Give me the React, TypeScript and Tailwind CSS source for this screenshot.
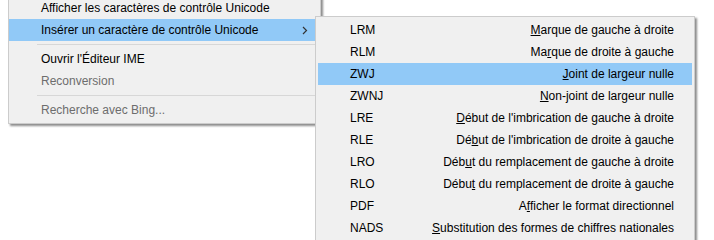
import { ReactNode } from "react";

type SubItem = { code: string; label: ReactNode; active?: boolean };

const subItems: SubItem[] = [
  { code: "LRM", label: <><u>M</u>arque de gauche à droite</> },
  { code: "RLM", label: <>Ma<u>r</u>que de droite à gauche</> },
  { code: "ZWJ", label: <><u>J</u>oint de largeur nulle</>, active: true },
  { code: "ZWNJ", label: <><u>N</u>on-joint de largeur nulle</> },
  { code: "LRE", label: <><u>D</u>ébut de l'imbrication de gauche à droite</> },
  { code: "RLE", label: <>Dé<u>b</u>ut de l'imbrication de droite à gauche</> },
  { code: "LRO", label: <>Déb<u>u</u>t du remplacement de gauche à droite</> },
  { code: "RLO", label: <>Débu<u>t</u> du remplacement de droite à gauche</> },
  { code: "PDF", label: <>A<u>f</u>ficher le format directionnel</> },
  { code: "NADS", label: <><u>S</u>ubstitution des formes de chiffres nationales</> },
];

function Separator() {
  return (
    <div className="py-[3px] pl-[28px]">
      <div className="h-px bg-[#d7d7d7]" />
    </div>
  );
}

function MenuRow({ children, disabled, active, arrow }: { children: ReactNode; disabled?: boolean; active?: boolean; arrow?: boolean }) {
  return (
    <div
      className={`flex h-[22px] items-center justify-between pl-[32px] pr-[10px] ${active ? "bg-[#91c9f7]" : ""} ${disabled ? "text-[#6d6d6d]" : "text-black"}`}
    >
      <span>{children}</span>
      {arrow && (
        <svg width="6" height="9" viewBox="0 0 6 9" className="mr-[2px]">
          <path d="M1 1 L4.5 4.5 L1 8" fill="none" stroke="#333" strokeWidth="1.2" />
        </svg>
      )}
    </div>
  );
}

export default function App() {
  return (
    <div
      className="relative h-[240px] w-[714px] overflow-hidden bg-white text-[12px] leading-[22px]"
      style={{ fontFamily: '"Liberation Sans", Arial, sans-serif' }}
    >
      {/* context menu */}
      <div className="absolute left-[8px] top-[-6px] w-[313px] border border-[#cccccc] bg-[#f0f0f0] py-[2px] shadow-[2px_2px_2px_rgba(0,0,0,0.45)]">
        <MenuRow>Afficher les caractères de contrôle Unicode</MenuRow>
        <MenuRow active arrow>Insérer un caractère de contrôle Unicode</MenuRow>
        <Separator />
        <MenuRow>Ouvrir l'Éditeur IME</MenuRow>
        <MenuRow disabled>Reconversion</MenuRow>
        <Separator />
        <MenuRow disabled>Recherche avec Bing...</MenuRow>
      </div>

      {/* submenu */}
      <div className="absolute left-[315px] top-[16px] w-[380px] border border-[#cccccc] bg-[#f0f0f0] py-[2px] shadow-[2px_2px_2px_rgba(0,0,0,0.45)]">
        {subItems.map((item) => (
          <div
            key={item.code}
            className={`mx-[2px] flex h-[22px] items-center justify-between pl-[32px] pr-[18px] text-black ${item.active ? "bg-[#91c9f7]" : ""}`}
          >
            <span>{item.code}</span>
            <span>{item.label}</span>
          </div>
        ))}
      </div>
    </div>
  );
}
